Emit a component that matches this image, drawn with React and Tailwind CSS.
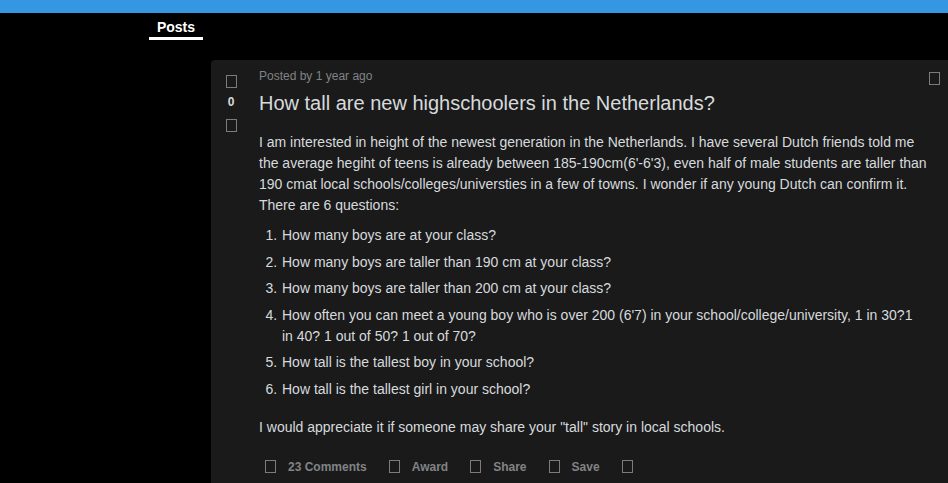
import React from "react";

/* missing-glyph box, drawn as a tiny outlined rectangle */
const Tofu = ({ className = "" }) => (
  <span
    className={`block w-[11px] h-[13px] border border-[#7c7c7c] shrink-0 ${className}`}
  />
);

const questions = [
  "How many boys are at your class?",
  "How many boys are taller than 190 cm at your class?",
  "How many boys are taller than 200 cm at your class?",
  "How often you can meet a young boy who is over 200 (6'7) in your school/college/university, 1 in 30?1 in 40? 1 out of 50? 1 out of 70?",
  "How tall is the tallest boy in your school?",
  "How tall is the tallest girl in your school?",
];

const actions = ["23 Comments", "Award", "Share", "Save"];

export default function App() {
  return (
    <div
      className="h-[483px] overflow-hidden bg-black text-[#d7dadc]"
      style={{ fontFamily: '"Liberation Sans", Arial, sans-serif' }}
    >
      {/* TOP BAR */}
      <div className="h-[13px] bg-[#3597e2]" />

      {/* TABS */}
      <div className="flex pl-[149px] pt-[6px]">
        <div className="w-[54px] flex flex-col items-center">
          <span className="text-[14px] font-bold leading-[16px] text-white">Posts</span>
          <span className="mt-[2px] h-[3px] w-full bg-white" />
        </div>
      </div>

      {/* CARD */}
      <div className="ml-[211px] mt-[20px] bg-[#1a1a1b] rounded-tl-[4px] flex h-[500px]">
        {/* VOTES */}
        <div className="w-[40px] shrink-0 flex flex-col items-center pt-[15px]">
          <Tofu />
          <span className="mt-[6px] text-[12px] font-bold leading-[16px] text-[#d7dadc]">0</span>
          <Tofu className="mt-[9px]" />
        </div>

        {/* CONTENT */}
        <div className="ml-[8px] w-[668px] shrink-0 pt-[8px]">
          <div className="text-[12px] leading-[16px] text-[#818384]">Posted by 1 year ago</div>
          <h1 className="mt-[7px] text-[20px] leading-[24px] text-[#d7dadc]">
            How tall are new highschoolers in the Netherlands?
          </h1>

          <div className="mt-[17px] text-[14px] leading-[21px]">
            <p>
              I am interested in height of the newest generation in the Netherlands. I have several Dutch
              friends told me the average hegiht of teens is already between 185-190cm(6'-6'3), even half
              of male students are taller than 190 cmat local schools/colleges/universties in a few of
              towns. I wonder if any young Dutch can confirm it. There are 6 questions:
            </p>
            <ol className="list-decimal pl-[22px] mt-[9px]">
              {questions.map((q) => (
                <li key={q} className="mb-[5.6px] pl-[1px]">
                  {q}
                </li>
              ))}
            </ol>
            <p className="mt-[17px]">
              I would appreciate it if someone may share your "tall" story in local schools.
            </p>
          </div>

          {/* ACTIONS */}
          <div className="mt-[15px] ml-[-2px] flex items-center gap-[6px]">
            {actions.map((a) => (
              <button
                key={a}
                className="flex items-center px-2 h-[28px] text-[12px] font-bold text-[#818384]"
              >
                <Tofu className="mr-[12px]" />
                {a}
              </button>
            ))}
            <span className="px-2 flex items-center h-[28px]">
              <Tofu />
            </span>
          </div>
        </div>

        {/* RIGHT */}
        <div className="pt-[12px] pl-[2px] flex items-start">
          <Tofu />
        </div>
      </div>
    </div>
  );
}
